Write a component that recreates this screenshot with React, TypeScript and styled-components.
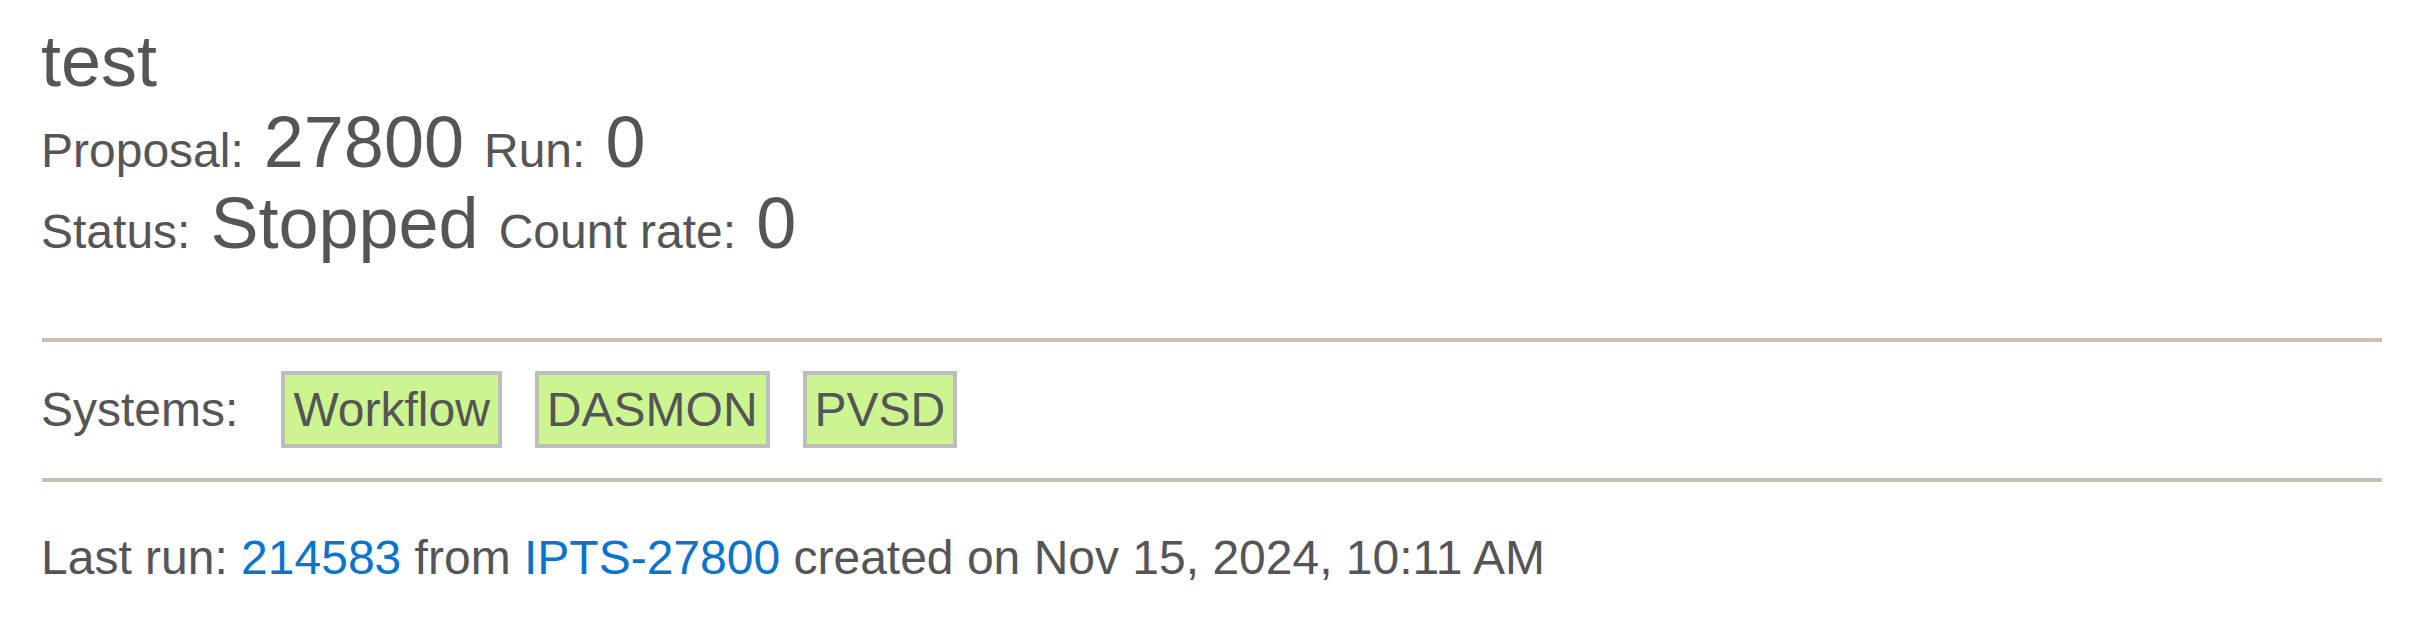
import React from "react";
import styled, { createGlobalStyle } from "styled-components";

const GlobalStyle = createGlobalStyle`
  html, body {
    margin: 0;
    padding: 0;
    background: #ffffff;
  }
  body {
    font-family: "Liberation Sans", Arial, Helvetica, sans-serif;
    color: #555555;
    font-size: 48px;
  }
`;

const Page = styled.div`
  padding: 20px 29px 0 41px;
`;

const Title = styled.div`
  font-size: 72px;
  line-height: 82px;
  font-weight: normal;
  margin: 0;
`;

const StatRow = styled.div`
  display: flex;
  align-items: baseline;
  gap: 20px;
  font-size: 48px;
  line-height: 1;
`;

const Label = styled.span`
  font-size: 48px;
  line-height: 48px;
`;

const Value = styled.span`
  font-size: 72px;
  line-height: 81px;
`;

const Divider = styled.div`
  height: 4px;
  margin-left: 1px;
  background: #cdc0b0;
`;

const TopDivider = styled(Divider)`
  margin-top: 74px;
`;

const SystemsRow = styled.div`
  display: flex;
  align-items: baseline;
  gap: 43px;
  padding: 29px 0 30px;
`;

const SystemsLabel = styled.span`
  font-size: 48px;
  line-height: 55px;
`;

const BadgeList = styled.div`
  display: flex;
  align-items: baseline;
  gap: 33px;
`;

const Badge = styled.span`
  display: inline-block;
  padding: 7px 8px;
  border: 4px solid #bdbdbd;
  background: #ccf591;
  font-size: 48px;
  line-height: 55px;
`;

const LastRun = styled.p`
  margin: 48px 0 0;
  font-size: 48px;
  line-height: normal;
`;

const Link = styled.a`
  color: #0a74cc;
  text-decoration: none;
`;

export default function App() {
  return (
    <>
      <GlobalStyle />
      <Page>
        <Title>test</Title>
        <StatRow>
          <Label>Proposal:</Label>
          <Value>27800</Value>
          <Label>Run:</Label>
          <Value>0</Value>
        </StatRow>
        <StatRow>
          <Label>Status:</Label>
          <Value>Stopped</Value>
          <Label>Count rate:</Label>
          <Value>0</Value>
        </StatRow>
        <TopDivider />
        <SystemsRow>
          <SystemsLabel>Systems:</SystemsLabel>
          <BadgeList>
            <Badge>Workflow</Badge>
            <Badge>DASMON</Badge>
            <Badge>PVSD</Badge>
          </BadgeList>
        </SystemsRow>
        <Divider />
        <LastRun>
          Last run: <Link href="#">214583</Link> from{" "}
          <Link href="#">IPTS-27800</Link> created on Nov 15, 2024, 10:11 AM
        </LastRun>
      </Page>
    </>
  );
}
